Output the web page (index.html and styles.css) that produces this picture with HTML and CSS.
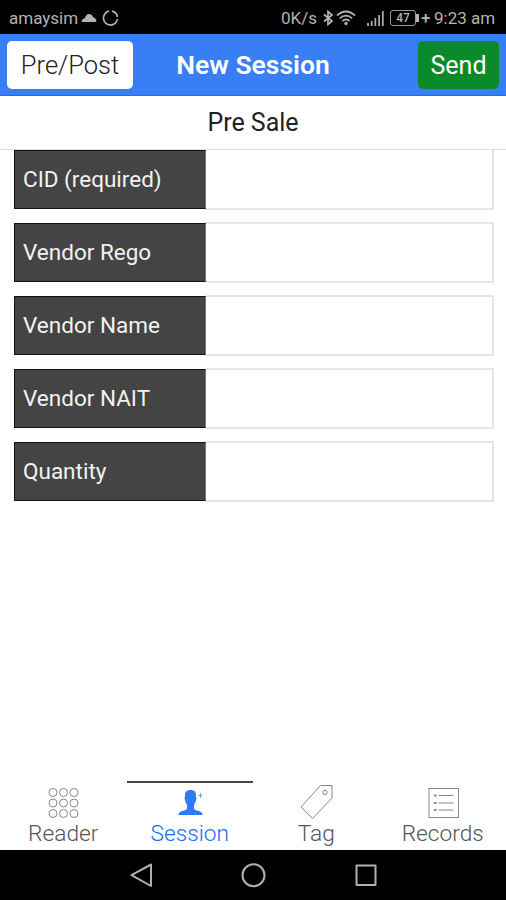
FILE: index.html
```html
<!DOCTYPE html>
<html lang="en">
<head>
  <meta charset="UTF-8">
  <meta name="viewport" content="width=device-width, initial-scale=1.0">
  <title>New Session</title>
  <link rel="stylesheet" href="styles.css">
</head>
<body>
  <div class="status-bar">
    <span class="carrier">amaysim</span>
    <svg class="cloud" width="16" height="10" viewBox="0 0 16 10"><path d="M1 9Q0 8.500 1 7Q2 5.500 4 5Q5 1 8 1Q11 1 12 4Q15 5 15.500 8Q15.500 9 14 9Z"/></svg>
    <svg class="ring" width="17" height="18" viewBox="0 0 17 18"><path d="M10 2.200A7 7 0 0 1 15.400 8M15.400 10A7 7 0 1 1 7 2.200"/></svg>
    <span class="speed">0K/s</span>
    <svg class="bluetooth" width="12" height="16" viewBox="0 0 12 16"><path d="M2 4.500L10 11L6 14.500V1.500L10 5L2 11.500"/></svg>
    <svg class="wifi" width="20" height="16" viewBox="0 0 20 16"><path d="M1 5.500Q10-2.500 19 5.500M3.800 8.300Q10 3 16.200 8.300M6.500 11Q10 8 13.500 11"/><circle cx="10" cy="13.500" r="1.700"/></svg>
    <svg class="signal" width="17" height="17" viewBox="0 0 17 17"><path d="M1 13V16M4.700 11V16M8.400 8V16M12.100 5V16M15.800 1V16"/></svg>
    <span class="battery">47</span>
    <span class="charging">+</span>
    <span class="clock">9:23 am</span>
  </div>

  <div class="header">
    <button class="btn btn-toggle">Pre/Post</button>
    <h1>New Session</h1>
    <button class="btn btn-send">Send</button>
  </div>
  <div class="subtitle">Pre Sale</div>

  <form class="session-form">
    <div class="field">
      <label for="cid">CID (required)</label>
      <input type="text" id="cid">
    </div>
    <div class="field">
      <label for="rego">Vendor Rego</label>
      <input type="text" id="rego">
    </div>
    <div class="field">
      <label for="name">Vendor Name</label>
      <input type="text" id="name">
    </div>
    <div class="field">
      <label for="nait">Vendor NAIT</label>
      <input type="text" id="nait">
    </div>
    <div class="field">
      <label for="quantity">Quantity</label>
      <input type="text" id="quantity">
    </div>
  </form>

  <div class="tabs">
    <a class="tab" href="#">
      <svg width="36" height="37" viewBox="0 0 36 37"><g><circle cx="8" cy="8.500" r="4"/><circle cx="18.500" cy="8.500" r="4"/><circle cx="29" cy="8.500" r="4"/><circle cx="8" cy="19" r="4"/><circle cx="18.500" cy="19" r="4"/><circle cx="29" cy="19" r="4"/><circle cx="8" cy="29.500" r="4"/><circle cx="18.500" cy="29.500" r="4"/><circle cx="29" cy="29.500" r="4"/></g></svg>
      <span>Reader</span>
    </a>
    <a class="tab active" href="#">
      <svg width="36" height="37" viewBox="0 0 36 37"><path class="person" d="M18.500 6C22.500 6 24.300 8 24 12.500Q25 14 23.800 17Q23 19.500 22 21V24.500Q22.500 26 27 27Q30.500 28 30.500 31H6.500Q6.500 28 10 27Q14.500 26 15 24.500V21Q14 19.500 13.200 17Q12 14 13 12.500C12.700 8 14.500 6 18.500 6Z"/><path class="plus" d="M28.500 9V14M26.500 11.500H30.500"/></svg>
      <span>Session</span>
    </a>
    <a class="tab" href="#">
      <svg width="36" height="37" viewBox="0 0 36 37"><path d="M22.500 1.500H34V14L14.500 34.500L3 23Z"/><circle cx="27" cy="8.500" r="2.200"/></svg>
      <span>Tag</span>
    </a>
    <a class="tab" href="#">
      <svg width="36" height="37" viewBox="0 0 36 37"><rect x="4" y="4.500" width="29.500" height="29"/><path d="M13.500 11.500H28.500M13.500 19H28.500M13.500 26H28.500"/><path class="bullets" d="M9 11.500H11.500M9 19H11.500M9 26H11.500"/></svg>
      <span>Records</span>
    </a>
  </div>

  <div class="nav-bar">
    <svg width="26" height="26" viewBox="0 0 26 26"><path d="M23 2.500V24L3.500 13.200Z"/></svg>
    <svg width="26" height="26" viewBox="0 0 26 26"><circle cx="13.500" cy="13.200" r="11"/></svg>
    <svg width="26" height="26" viewBox="0 0 26 26"><rect x="4.500" y="3.500" width="19" height="19.500"/></svg>
  </div>
</body>
</html>
```

FILE: styles.css
```css
* {
  margin: 0;
  padding: 0;
  box-sizing: border-box;
}

body {
  font-family: Roboto, sans-serif;
  background-color: #fff;
  display: flex;
  flex-direction: column;
  height: 900px;
  overflow: hidden;
}

svg {
  display: block;
  flex: none;
  fill: none;
}

/* Phone status bar */
.status-bar {
  display: flex;
  align-items: center;
  height: 34px;
  padding: 2px 10px 0 9px;
  background-color: #000;
  color: #b3b3b3;
  font-size: 17px;
  white-space: nowrap;
}

.status-bar svg {
  stroke: #b3b3b3;
  stroke-width: 1.7;
}

.carrier {
  width: 72px;
}

.status-bar .cloud {
  fill: #b3b3b3;
  stroke: none;
}

.ring {
  margin-left: 5px;
}

.speed {
  margin-left: auto;
  width: 41px;
}

.wifi {
  margin-left: 2px;
  margin-right: 1px;
}

.wifi circle {
  fill: #b3b3b3;
  stroke: none;
}

.signal {
  margin-left: 10px;
}

.battery {
  position: relative;
  width: 26px;
  height: 16px;
  margin-left: 6px;
  margin-right: 1px;
  border: 1px solid #999;
  border-radius: 3px;
  font-size: 12px;
  font-weight: 500;
  line-height: 14px;
  text-align: center;
}

.battery::after {
  content: "";
  position: absolute;
  top: 3px;
  right: -4px;
  width: 3px;
  height: 8px;
  background-color: #b3b3b3;
}

.charging {
  width: 11px;
  margin-left: 4px;
  font-weight: 500;
  line-height: 16px;
}

.clock {
  width: 62px;
  margin-left: 2px;
}

/* Header */
.header {
  display: grid;
  grid-template-columns: 1fr auto 1fr;
  align-items: center;
  height: 62px;
  padding: 0 7px;
  background-color: #387ef5;
  border-bottom: 1px solid #1f6cf0;
}

.header h1 {
  color: #fff;
  font-size: 26.5px;
  font-weight: 600;
  line-height: 30px;
  white-space: nowrap;
}

.btn {
  height: 48px;
  border: none;
  border-radius: 5px;
  font-family: inherit;
  font-size: 25px;
}

.btn-toggle {
  width: 126px;
  padding-top: 1px;
  background-color: #fff;
  color: #222;
  font-size: 25.5px;
  font-weight: 300;
}

.btn-send {
  justify-self: end;
  width: 81px;
  padding-top: 1px;
  background-color: #0a8a2a;
  color: #fff;
}

.subtitle {
  height: 54px;
  border-bottom: 1px solid #ddd;
  color: #222;
  font-size: 25px;
  line-height: 54px;
  text-align: center;
}

/* Session form */
.session-form {
  flex: 1;
  padding: 0 12px 0 14px;
}

.field {
  display: flex;
  height: 59px;
  margin-bottom: 14.1px;
}

.field label {
  width: 192px;
  padding-left: 8px;
  background-color: #444;
  border: 1px solid #111;
  border-right-color: #777;
  color: #f2f2f2;
  font-size: 22.5px;
  line-height: 56px;
  white-space: nowrap;
}

.field input {
  flex: 1;
  min-width: 0;
  margin: -1px 0;
  border: 2px solid #e6e6e6;
  border-left: none;
  outline: none;
}

.field:first-child input {
  margin-top: 0;
  border-top: none;
}

/* Bottom tabs */
.tabs {
  display: flex;
  height: 69px;
}

.tab {
  flex: 1;
  display: flex;
  flex-direction: column;
  align-items: center;
  padding-top: 1px;
  border-top: 2px solid transparent;
  color: #555;
  font-size: 22.7px;
  font-weight: 300;
  line-height: 25px;
  text-decoration: none;
}

.tab svg {
  stroke: #888;
}

.tab.active {
  border-top-color: #444;
  color: #1a6df2;
}

.tab .person {
  fill: #2f7af5;
  stroke: none;
}

.tab .plus {
  stroke: #6ba1f7;
}

.tab .bullets {
  stroke-width: 2;
}

/* Android navigation */
.nav-bar {
  display: flex;
  justify-content: center;
  gap: 86px;
  height: 50px;
  padding-top: 12px;
  background-color: #000;
}

.nav-bar svg {
  stroke: #b0b0b0;
  stroke-width: 2;
  stroke-linejoin: round;
}
```
